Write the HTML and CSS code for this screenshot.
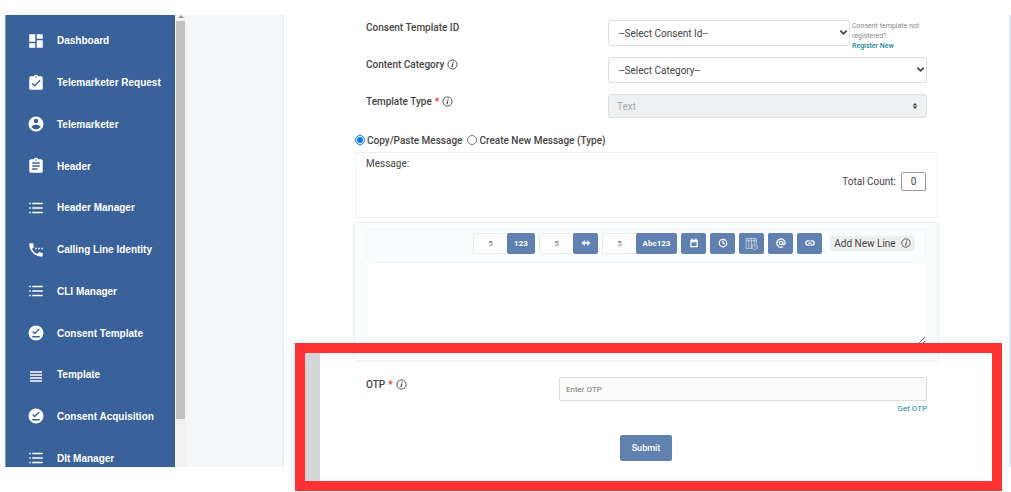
FILE: index.html
```html
<!DOCTYPE html>
<html lang="en">
<head>
    <meta charset="UTF-8">
    <meta name="viewport" content="width=device-width, initial-scale=1.0">
    <title>Content Template</title>
    <link rel="stylesheet" href="styles.css">
</head>
<body>

    <!-- shared icons -->
    <svg class="sprite" aria-hidden="true">
        <symbol id="i-list" viewBox="0 0 24 24"><path d="M3 5h2v2H3zM3 11h2v2H3zM3 17h2v2H3zM7 5h14v2H7zM7 11h14v2H7zM7 17h14v2H7z"/></symbol>
        <symbol id="i-done" viewBox="0 0 24 24"><path fill-rule="evenodd" d="M12 2a10 10 0 1 0 0 20 10 10 0 0 0 0-20zM17 18H7v-2h10zM10.300 14L7 10.700l1.400-1.400 1.900 1.900 5.300-5.200L17 7.300z"/></symbol>
        <symbol id="i-info" viewBox="0 0 24 24"><circle cx="12" cy="12" r="10" fill="none" stroke="currentColor" stroke-width="2"/><path d="M12.500 6h2.500l-.6 2.400h-2.500zM11.400 10H14l-1.800 8H9.600z"/></symbol>
        <symbol id="i-down" viewBox="0 0 10 10"><path d="M1.500 3L5 6.500 8.500 3" fill="none" stroke="currentColor" stroke-width="2"/></symbol>
    </svg>

    <div class="page">
        <nav class="sidebar">
            <ul>
                <li><a href="#"><svg viewBox="0 0 24 24"><path d="M3 13h8V3H3zM3 21h8v-6H3zM13 21h8V11h-8zM13 3v6h8V3z"/></svg>Dashboard</a></li>
                <li><a href="#"><svg viewBox="0 0 24 24"><path fill-rule="evenodd" d="M19 3h-4.200a3 3 0 0 0-5.600 0H5a2 2 0 0 0-2 2v14c0 1.100.9 2 2 2h14a2 2 0 0 0 2-2V5a2 2 0 0 0-2-2zM12 3a1 1 0 1 1 0 2 1 1 0 0 1 0-2zM10 17l-4-4 1.400-1.400 2.600 2.600 6.600-6.600L18 9z"/></svg>Telemarketer Request</a></li>
                <li><a href="#"><svg viewBox="0 0 24 24"><path fill-rule="evenodd" d="M12 2a10 10 0 1 0 0 20 10 10 0 0 0 0-20zM12 5a3 3 0 1 1 0 6 3 3 0 0 1 0-6zM12 19.200a7.200 7.200 0 0 1-6-3.200c0-2 4-3.100 6-3.100s6 1.100 6 3.100a7.200 7.200 0 0 1-6 3.200z"/></svg>Telemarketer</a></li>
                <li><a href="#"><svg viewBox="0 0 24 24"><path fill-rule="evenodd" d="M19 3h-4.200a3 3 0 0 0-5.600 0H5a2 2 0 0 0-2 2v14c0 1.100.9 2 2 2h14a2 2 0 0 0 2-2V5a2 2 0 0 0-2-2zM12 3a1 1 0 1 1 0 2 1 1 0 0 1 0-2zM14 17H7v-2h7zM17 13H7v-2h10zM17 9H7V7h10z"/></svg>Header</a></li>
                <li><a href="#"><svg><use href="#i-list"/></svg>Header Manager</a></li>
                <li><a href="#"><svg viewBox="0 0 24 24"><path d="M11 9h2v2h-2zM15 9h2v2h-2zM19 9h2v2h-2zM20 15.500c-1.300 0-2.500-.2-3.600-.6-.3-.1-.7 0-1 .3l-2.200 2.200a15 15 0 0 1-6.600-6.600l2.200-2.200c.3-.3.4-.7.2-1A11 11 0 0 1 8.500 4c0-.6-.4-1-1-1H4c-.5 0-1 .4-1 1a17 17 0 0 0 17 17c.6 0 1-.4 1-1v-3.500c0-.6-.4-1-1-1z"/></svg>Calling Line Identity</a></li>
                <li><a href="#"><svg><use href="#i-list"/></svg>CLI Manager</a></li>
                <li><a href="#"><svg><use href="#i-done"/></svg>Consent Template</a></li>
                <li><a href="#"><svg viewBox="0 0 24 24"><path d="M4 15h16v2H4zM4 19h16v2H4zM4 11h16v2H4zM4 7h16v2H4z"/></svg>Template</a></li>
                <li><a href="#"><svg><use href="#i-done"/></svg>Consent Acquisition</a></li>
                <li><a href="#"><svg><use href="#i-list"/></svg>Dlt Manager</a></li>
            </ul>
        </nav>
        <div class="scrollbar"><span class="arrow"></span><span class="thumb"></span></div>
        <div class="gutter"></div>

        <main>
            <form>
                <div class="row">
                    <label for="consentId">Consent Template ID</label>
                    <div class="field">
                        <div class="select">
                            <select id="consentId"><option>--Select Consent Id--</option></select>
                            <svg><use href="#i-down"/></svg>
                        </div>
                        <p class="help">Consent template not registered? <a href="#">Register New</a></p>
                    </div>
                </div>
                <div class="row">
                    <label for="category">Content Category <svg class="info"><use href="#i-info"/></svg></label>
                    <div class="field">
                        <div class="select">
                            <select id="category"><option>--Select Category--</option></select>
                            <svg><use href="#i-down"/></svg>
                        </div>
                    </div>
                </div>
                <div class="row">
                    <label for="type">Template Type <span class="req">*</span> <svg class="info"><use href="#i-info"/></svg></label>
                    <div class="field">
                        <div class="select type">
                            <select id="type" disabled><option>Text</option></select>
                            <svg viewBox="0 0 10 10"><path d="M5 0l4 4H1zM5 10L1 6h8z"/></svg>
                        </div>
                    </div>
                </div>

                <div class="modes">
                    <label><input type="radio" name="mode" checked>Copy/Paste Message</label>
                    <label><input type="radio" name="mode">Create New Message (Type)</label>
                </div>

                <div class="message">
                    <div>Message:</div>
                    <div class="count"><label for="count">Total Count:</label><input type="text" id="count" value="0" readonly></div>
                </div>

                <div class="editor">
                    <div class="toolbar">
                        <div class="group"><input type="text" value="5" aria-label="Number length"><button type="button" class="num">123</button></div>
                        <div class="group"><input type="text" value="5" aria-label="Text length"><button type="button" aria-label="Text"><svg viewBox="0 0 24 24"><path d="M9 5v5h6V5l8 7-8 7v-5H9v5l-8-7z"/></svg></button></div>
                        <div class="group"><input type="text" value="5" aria-label="Alphanumeric length"><button type="button" class="alnum">Abc123</button></div>
                        <button type="button" aria-label="Date"><svg viewBox="0 0 24 24"><path fill-rule="evenodd" d="M3 4h3V1h3v3h6V1h3v3h3v18H3zM6 10v9h12v-9z"/></svg></button>
                        <button type="button" aria-label="Time"><svg viewBox="0 0 24 24"><circle cx="12" cy="12" r="9" class="line"/><path d="M12 6v6l4 3" class="line"/></svg></button>
                        <button type="button" aria-label="Date and time"><svg class="big" viewBox="0 0 24 24"><path d="M13 21H2V3h19v9M2 7h19M7 3v18M12 3v18M17 3v9" class="thin"/><circle cx="18" cy="18" r="5" class="thin"/><path d="M18 15v3h3" class="thin"/></svg></button>
                        <button type="button" aria-label="Email"><svg viewBox="0 0 24 24"><circle cx="12" cy="12" r="4" class="line"/><path d="M16 8v5c0 4 6 4 6-1a10 10 0 1 0-5 9" class="line"/></svg></button>
                        <button type="button" aria-label="Link"><svg viewBox="0 0 24 24"><path d="M11 7H7a5 5 0 0 0 0 10h4M13 7h4a5 5 0 0 1 0 10h-4M8 12h8" class="line"/></svg></button>
                        <button type="button" class="newline">Add New Line <svg class="info"><use href="#i-info"/></svg></button>
                    </div>
                    <textarea aria-label="Message text"></textarea>
                </div>

                <section class="otp">
                    <div class="highlight"></div>
                    <div class="row">
                        <label for="otp">OTP <span class="req">*</span> <svg class="info"><use href="#i-info"/></svg></label>
                        <div class="field">
                            <input type="text" id="otp" placeholder="Enter OTP">
                            <a href="#">Get OTP</a>
                        </div>
                    </div>
                    <button type="submit" class="submit">Submit</button>
                </section>
            </form>
        </main>
    </div>

</body>
</html>
```

FILE: styles.css
```css
* {
    box-sizing: border-box;
}

body {
    display: flex;
    flex-direction: column;
    min-height: 100vh;
    margin: 0;
    padding: 15px 0 25px 5px;
    font-family: Roboto, sans-serif;
    font-size: 10px;
    color: #444;
    background-color: #fff;
}

ul, p {
    margin: 0;
    padding: 0;
    list-style: none;
}

a {
    color: #17899a;
    text-decoration: none;
}

svg {
    fill: currentColor;
    flex: none;
}

input, select, button, textarea {
    font-family: inherit;
    font-size: 10px;
    color: inherit;
    margin: 0;
    padding: 0;
}

.sprite {
    display: none;
}

.page {
    display: flex;
    flex: 1;
}

/* sidebar */
.sidebar {
    width: 170px;
    flex: none;
    height: calc(100vh - 40px);
    overflow: hidden;
    background-color: #3a629a;
    border-left: 1px solid #7f9bc2;
}

.sidebar ul {
    display: flex;
    flex-direction: column;
    height: 459px;
    margin-top: 5px;
}

.sidebar li {
    flex: 1;
}

.sidebar a {
    display: flex;
    align-items: center;
    gap: 12px;
    height: 100%;
    padding-left: 21px;
    color: #fff;
    font-family: "Liberation Sans", Arial, sans-serif;
    font-weight: bold;
}

.sidebar svg {
    width: 18px;
    height: 18px;
}

.scrollbar {
    display: flex;
    flex-direction: column;
    align-items: center;
    width: 11px;
    flex: none;
    padding: 0 1px;
    background-color: #f1f1f1;
}

.scrollbar .arrow {
    border: 3px solid transparent;
    border-top: 0;
    border-bottom-color: #999;
    margin-bottom: 3px;
}

.scrollbar .thumb {
    width: 100%;
    height: 88%;
    background-color: #c1c1c1;
}

.gutter {
    width: 98px;
    flex: none;
    background-color: #f3f7fa;
    border-right: 2px solid #eceffa;
}

/* form */
main {
    flex: 1;
    padding: 5px 72px 0 71px;
    border-right: 2px solid #e4e6fb;
}

.row {
    display: grid;
    grid-template-columns: 242px 1fr;
    height: 37px;
    padding: 0 10px 0 11px;
}

.row > label {
    display: flex;
    align-items: center;
    gap: 3px;
    height: 14px;
    font-weight: 500;
}

.info {
    width: 11px;
    height: 11px;
}

.req {
    color: #e53935;
}

.row .field {
    display: flex;
}

.select {
    position: relative;
    flex: 1;
}

.select select {
    appearance: none;
    width: 100%;
    height: 26px;
    padding: 0 10px;
    background-color: #fff;
    border: 1px solid #dcdfe1;
    border-radius: 3px;
}

.select svg {
    position: absolute;
    top: 8px;
    right: 2px;
    width: 9px;
    height: 9px;
}

.select.type select {
    height: 24px;
    padding: 0 8px;
    color: #a4a8ac;
    background-color: #eff0f2;
    opacity: 1;
}

.select.type svg {
    top: 9px;
    right: 9px;
    width: 6px;
    height: 6px;
}

.help {
    width: 77px;
    padding: 1px 0 0 2px;
    font-size: 7px;
    line-height: 10px;
    color: #888;
}

.help a {
    display: block;
    font-weight: 500;
}

.modes {
    display: flex;
    gap: 5px;
    margin-top: 2px;
    height: 19px;
    font-weight: 500;
}

.modes label {
    display: flex;
    align-items: center;
    height: 14px;
    gap: 2px;
}

.modes input {
    width: 10px;
    height: 10px;
}

.message {
    display: flex;
    justify-content: space-between;
    height: 66px;
    padding: 5px 10px;
    border: 1px solid #f1f1f1;
}

.count {
    display: flex;
    align-items: center;
    align-self: flex-start;
    gap: 5px;
    margin-top: 14px;
}

.count input {
    width: 25px;
    height: 19px;
    text-align: center;
    background-color: #fff;
    border: 1px solid #999;
    border-radius: 2px;
}

/* message editor */
.editor {
    margin-top: 5px;
    padding: 6px 11px 15px;
    background-color: #f9fdfe;
    box-shadow: 0 0 4px rgba(0, 0, 0, 0.15);
}

.toolbar {
    display: flex;
    align-items: center;
    justify-content: flex-end;
    gap: 4px;
    height: 33px;
    padding: 0 10px 6px 0;
    border: 1px solid #f3f6f7;
    border-bottom: 0;
}

.toolbar .group {
    display: flex;
}

.toolbar input {
    width: 34px;
    height: 21px;
    font-size: 8px;
    text-align: center;
    color: #777;
    background-color: #fff;
    border: 1px solid #e6e8ea;
    border-right: 0;
    border-radius: 2px 0 0 2px;
}

.toolbar button {
    display: flex;
    align-items: center;
    justify-content: center;
    width: 25px;
    height: 21px;
    font-size: 8px;
    font-weight: 700;
    color: #fff;
    background-color: #6080af;
    border: 0;
    border-radius: 2px;
}

.toolbar button.num {
    width: 28px;
}

.toolbar button.alnum {
    width: 41px;
}

.toolbar button svg {
    width: 10px;
    height: 10px;
}

.toolbar button svg.big {
    width: 13px;
    height: 13px;
}

.line {
    fill: none;
    stroke: currentColor;
    stroke-width: 3;
}

.thin {
    fill: none;
    stroke: currentColor;
    stroke-width: 1;
}

.toolbar button.newline {
    gap: 5px;
    width: 85px;
    height: 15px;
    margin-left: 4px;
    font-size: 10px;
    font-weight: 400;
    white-space: nowrap;
    color: #444;
    background-color: #eee;
}

.editor textarea {
    display: block;
    width: 100%;
    height: 83px;
    border: 0;
    background: linear-gradient(#eceff1, #eceff1) center top / calc(100% - 22px) 1px no-repeat #fff;
    resize: vertical;
}

/* otp */
.otp {
    position: relative;
    padding-top: 17px;
}

.otp .row {
    grid-template-columns: 193px 1fr;
    height: 58px;
}

.otp .field {
    flex-direction: column;
    align-items: flex-end;
    gap: 3px;
    font-size: 8px;
}

.otp .field input {
    width: 100%;
    height: 24px;
    padding: 0 6px;
    font-size: 8px;
    background-color: #fafafa;
    border: 1px solid #dcdfe1;
    border-radius: 2px;
}

.submit {
    display: block;
    width: 52px;
    height: 26px;
    margin: 0 auto;
    font-size: 9px;
    font-weight: 500;
    color: #fff;
    background-color: #6080af;
    border: 0;
    border-radius: 2px;
}

/* red frame round the otp step */
.highlight {
    position: absolute;
    top: -17px;
    right: -65px;
    left: -60px;
    height: 148px;
    border: 10px solid #ff3131;
    pointer-events: none;
}

.highlight::before {
    content: "";
    display: block;
    width: 15px;
    height: 100%;
    background-color: #d6d6d6;
}
```
